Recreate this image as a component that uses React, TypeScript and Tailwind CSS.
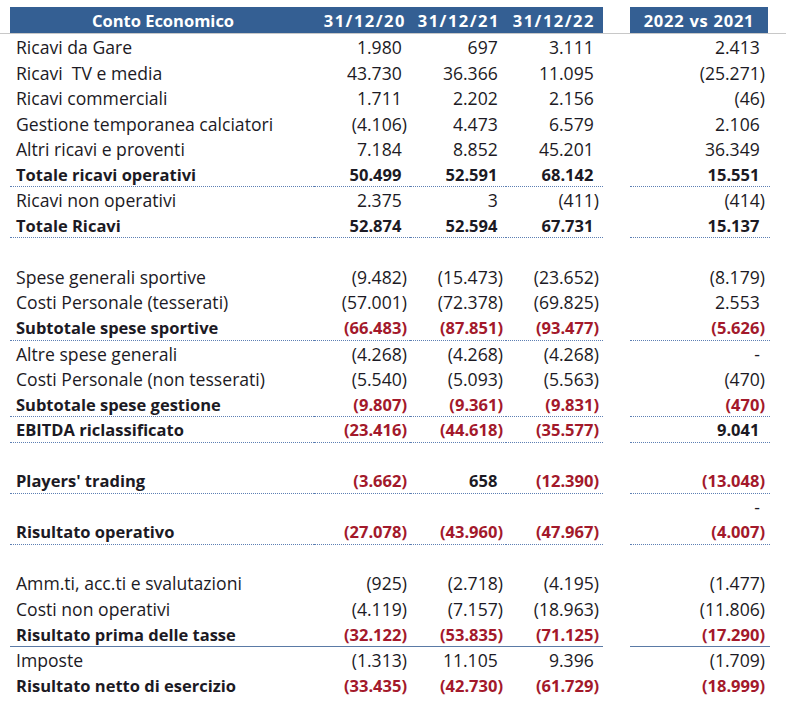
import React from "react";

type Row = {
  label?: string;
  vals?: (number | null | "-")[];
  diff?: number | "-" | null;
  bold?: boolean;
  line?: "dotted" | "solid";
};

const rows: Row[] = [
  { label: "Ricavi da Gare", vals: [1980, 697, 3111], diff: 2413 },
  { label: "Ricavi  TV e media", vals: [43730, 36366, 11095], diff: -25271 },
  { label: "Ricavi commerciali", vals: [1711, 2202, 2156], diff: -46 },
  { label: "Gestione temporanea calciatori", vals: [-4106, 4473, 6579], diff: 2106 },
  { label: "Altri ricavi e proventi", vals: [7184, 8852, 45201], diff: 36349 },
  { label: "Totale ricavi operativi", vals: [50499, 52591, 68142], diff: 15551, bold: true, line: "dotted" },
  { label: "Ricavi non operativi", vals: [2375, 3, -411], diff: -414 },
  { label: "Totale Ricavi", vals: [52874, 52594, 67731], diff: 15137, bold: true, line: "dotted" },
  {},
  { label: "Spese generali sportive", vals: [-9482, -15473, -23652], diff: -8179 },
  { label: "Costi Personale (tesserati)", vals: [-57001, -72378, -69825], diff: 2553 },
  { label: "Subtotale spese sportive", vals: [-66483, -87851, -93477], diff: -5626, bold: true, line: "dotted" },
  { label: "Altre spese generali", vals: [-4268, -4268, -4268], diff: "-" },
  { label: "Costi Personale (non tesserati)", vals: [-5540, -5093, -5563], diff: -470 },
  { label: "Subtotale spese gestione", vals: [-9807, -9361, -9831], diff: -470, bold: true, line: "dotted" },
  { label: "EBITDA riclassificato", vals: [-23416, -44618, -35577], diff: 9041, bold: true, line: "dotted" },
  {},
  { label: "Players' trading", vals: [-3662, 658, -12390], diff: -13048, bold: true, line: "dotted" },
  { diff: "-" },
  { label: "Risultato operativo", vals: [-27078, -43960, -47967], diff: -4007, bold: true, line: "dotted" },
  {},
  { label: "Amm.ti, acc.ti e svalutazioni", vals: [-925, -2718, -4195], diff: -1477 },
  { label: "Costi non operativi", vals: [-4119, -7157, -18963], diff: -11806 },
  { label: "Risultato prima delle tasse", vals: [-32122, -53835, -71125], diff: -17290, bold: true, line: "solid" },
  { label: "Imposte", vals: [-1313, 11105, 9396], diff: -1709 },
  { label: "Risultato netto di esercizio", vals: [-33435, -42730, -61729], diff: -18999, bold: true },
];

function fmt(n: number) {
  return Math.abs(n)
    .toString()
    .replace(/\B(?=(\d{3})+(?!\d))/g, ".");
}

function Num({ v, bold }: { v: number | null | "-" | undefined; bold?: boolean }) {
  if (v === null || v === undefined) return null;
  if (v === "-") {
    return (
      <span>
        -<span className="invisible">)</span>
      </span>
    );
  }
  if (v < 0) {
    return <span className={bold ? "text-[#a3192b]" : ""}>({fmt(v)})</span>;
  }
  return (
    <span>
      {fmt(v)}
      <span className="invisible">)</span>
    </span>
  );
}

export default function App() {
  return (
    <div
      className="w-[786px] h-[708px] bg-white pt-[7px] leading-none text-[#1c1a24] overflow-hidden"
      style={{ fontFamily: "'Open Sans', Lato, sans-serif" }}
    >
      <div className="w-full border-b border-[#c8c8c8]">
        <div className="ml-[10px] grid grid-cols-[304px_96px_96px_97px_27px_138px] h-[26px] items-stretch font-bold text-white text-[16.5px]">
          <div className="bg-[#345f93] flex items-center justify-center pl-[2px] pt-[2px]">Conto Economico</div>
          <div className="bg-[#345f93] flex items-center justify-end pr-[4px] pt-[2px] tracking-[1.5px]">31/12/20</div>
          <div className="bg-[#345f93] flex items-center justify-end pr-[6px] pt-[2px] tracking-[1.5px]">31/12/21</div>
          <div className="bg-[#345f93] flex items-center justify-end pr-[8px] pt-[2px] tracking-[1.5px]">31/12/22</div>
          <div />
          <div className="bg-[#345f93] flex items-center justify-center pt-[2px] tracking-[0.75px]">2022 vs 2021</div>
        </div>
      </div>
      <div className="ml-[10px]">
        {rows.map((r, i) => {
          const border =
            r.line === "dotted"
              ? "border-b border-dotted border-[#5d7fb3]"
              : r.line === "solid"
              ? "border-b border-solid border-[#5a7aa6]"
              : "";
          return (
            <div
              key={i}
              className={`grid grid-cols-[304px_96px_96px_97px_27px_140px] h-[25.56px] ${
                r.bold ? "font-bold text-[16.5px]" : "text-[17.6px]"
              }`}
            >
              <div className={`flex items-center pl-[6px] pt-[2px] whitespace-pre ${border}`}>{r.label}</div>
              <div className={`flex items-center justify-end pr-[3px] pt-[2px] ${border}`}>
                <Num v={r.vals?.[0]} bold={r.bold} />
              </div>
              <div className={`flex items-center justify-end pr-[3px] pt-[2px] ${border}`}>
                <Num v={r.vals?.[1]} bold={r.bold} />
              </div>
              <div className={`flex items-center justify-end pr-[4px] pt-[2px] ${border}`}>
                <Num v={r.vals?.[2]} bold={r.bold} />
              </div>
              <div />
              <div className={`flex items-center justify-end pr-[5px] pt-[2px] ${border}`}>
                <Num v={r.diff} bold={r.bold} />
              </div>
            </div>
          );
        })}
      </div>
    </div>
  );
}
